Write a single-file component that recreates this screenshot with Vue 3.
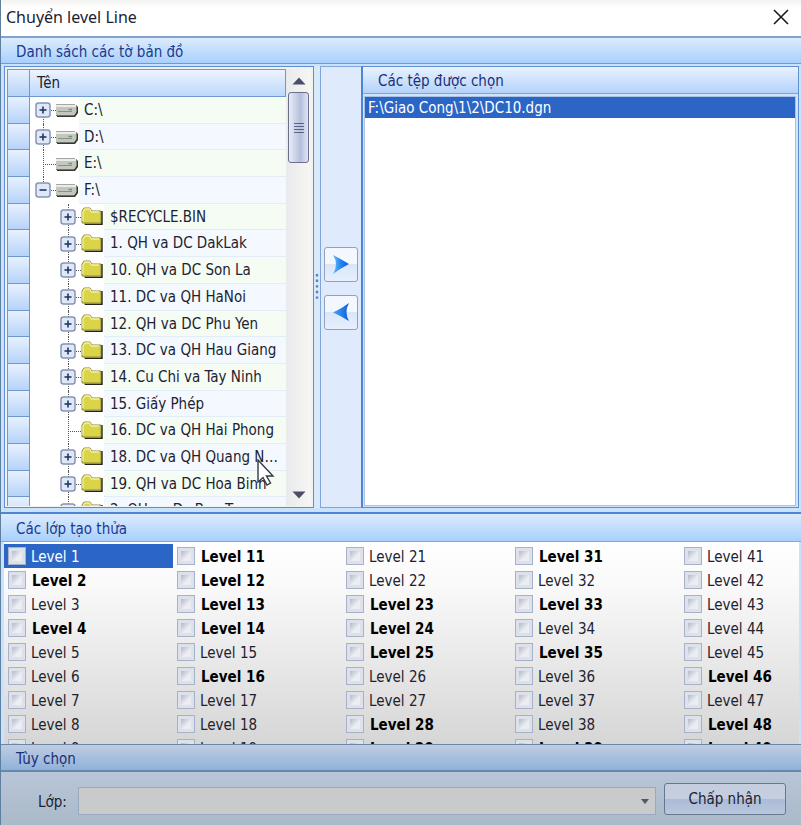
<script setup>
import { ref } from 'vue'

const drives = [
  { name: 'C:\\', expand: '+', level: 0, line: 'down' },
  { name: 'D:\\', expand: '+', level: 0, line: 'full' },
  { name: 'E:\\', expand: '', level: 0, line: 'full' },
  { name: 'F:\\', expand: '-', level: 0, line: 'up' },
]
const folders = [
  '$RECYCLE.BIN',
  '1. QH va DC DakLak',
  '10. QH va DC Son La',
  '11. DC va QH HaNoi',
  '12. QH va DC Phu Yen',
  '13. DC va QH Hau Giang',
  '14. Cu Chi va Tay Ninh',
  '15. Giấy Phép',
  '16. DC va QH Hai Phong',
  '18. DC va QH Quang Ngai',
  '19. QH va DC Hoa Binh',
  '2. QH va Dc Bao Tam',
].map((name) => ({ name, expand: name.startsWith('16') ? '' : '+', level: 1, line: 'full' }))
const rows = [...drives, ...folders]

const used = [2, 4, 11, 12, 13, 14, 16, 23, 24, 25, 28, 29, 31, 33, 35, 39, 46, 48, 49]
const levels = []
for (let column = 0; column < 5; column++) {
  for (let n = 1; n <= 9; n++) {
    const id = column * 10 + n
    levels.push({ id, bold: used.includes(id) })
  }
}
const checked = ref([])
const layer = ref('')
</script>

<template>
  <main class="window">
    <header class="titlebar">
      <h1>Chuyển level Line</h1>
      <button class="close" type="button" aria-label="Đóng">
        <svg width="16" height="16" viewBox="0 0 16 16"><path d="M1 1L15 15M15 1L1 15" stroke="#1c1c1c" stroke-width="1.6" fill="none" /></svg>
      </button>
    </header>

    <h2 class="caption">Danh sách các tờ bản đồ</h2>
    <section class="panes">
      <div class="tree">
        <div class="grid">
          <div class="head"><span class="indicator"></span><span class="column">Tên</span></div>
          <div class="viewport">
            <div class="rows" role="tree">
              <div v-for="row in rows" :key="row.name" class="row" role="treeitem">
                <span class="indicator"></span>
                <span class="node" :class="[row.line, { child: row.level }]">
                  <button v-if="row.expand" class="expander" type="button" :aria-label="row.name">
                    <svg width="16" height="16" viewBox="0 0 16 16">
                      <rect x="1" y="1" width="14" height="14" rx="2.5" fill="#dfe8f8" stroke="#8795b5" stroke-width="1.5" />
                      <path d="M4.500 8H11.500" stroke="#25355f" stroke-width="1.6" />
                      <path v-if="row.expand === '+'" d="M8 4.500V11.500" stroke="#25355f" stroke-width="1.6" />
                    </svg>
                  </button>
                </span>
                <svg v-if="row.level" class="icon" width="23" height="20" viewBox="0 0 23 20">
                  <path d="M3 16.500H20V4H21.700V18H4Z" fill="#262419" />
                  <path d="M1 15.500V4L3 1H9L11 4H20V16H1Z" fill="#d9d448" stroke="#8f8a3c" />
                  <path d="M2 14V5L4 2H8.500L10.500 5H18" fill="none" stroke="#f5f0a2" stroke-width="1.3" />
                </svg>
                <svg v-else class="icon" width="23" height="20" viewBox="0 0 23 20">
                  <path d="M1 15H18L20 12V5L22 7V13L19 17H1Z" fill="#35382f" />
                  <path d="M0 5H19L20.500 7V12L18 15.500H0Z" fill="#c3c7c0" />
                  <path d="M0 4.500H19L20.500 7H0Z" fill="#e9ece7" />
                  <path d="M0 4.500H19" stroke="#a4a8a1" />
                  <path d="M0 15.500H18" stroke="#6f746c" />
                  <path d="M2 11.500H16" stroke="#8b9188" />
                  <path d="M12.500 9.500H16" stroke="#5f9d63" stroke-width="1.5" />
                </svg>
                <span class="name">{{ row.name }}</span>
              </div>
            </div>
          </div>
          <svg class="pointer" width="20" height="28" viewBox="0 0 20 28"><path d="M2 1V23L7 18.500L11 26L14.500 24L10.500 17H17Z" fill="#fff" stroke="#333a42" stroke-width="1.4" /></svg>
        </div>
        <div class="scrollbar">
          <button type="button" aria-label="Cuộn lên"><svg width="14" height="8" viewBox="0 0 14 8"><path d="M0.500 7.500L7 0.500L13.500 7.500Z" fill="#4c4c68" /></svg></button>
          <div class="thumb"><svg width="10" height="12" viewBox="0 0 10 12"><path d="M0 1.500H10M0 4.500H10M0 7.500H10M0 10.500H10" stroke="#59618a" /></svg></div>
          <button class="down" type="button" aria-label="Cuộn xuống"><svg width="14" height="8" viewBox="0 0 14 8"><path d="M0.500 0.500H13.500L7 7.500Z" fill="#4c4c68" /></svg></button>
        </div>
      </div>
      <div class="splitter"><svg width="4" height="26" viewBox="0 0 4 26"><path d="M2 0V26" stroke="#4f83cf" stroke-width="2.4" stroke-dasharray="2.400 3.200" /></svg></div>
      <div class="transfer">
        <button type="button" aria-label="Thêm">
          <svg width="18" height="22" viewBox="0 0 18 22"><defs><linearGradient id="add"><stop offset="0" stop-color="#6fbdf5" /><stop offset="0.500" stop-color="#1f83ee" /><stop offset="1" stop-color="#0a5fd8" /></linearGradient></defs><path d="M1 2Q9 6 17 11Q9 15 1 21Q7 11 1 2Z" fill="url(#add)" /></svg>
        </button>
        <button type="button" aria-label="Bớt">
          <svg width="18" height="22" viewBox="0 0 18 22"><defs><linearGradient id="remove"><stop offset="0" stop-color="#4aa6f5" /><stop offset="1" stop-color="#0a5fd8" /></linearGradient></defs><path d="M17 2Q12 11 17 20Q9 15 1 11.500Q9 8 17 2Z" fill="url(#remove)" /></svg>
        </button>
      </div>
      <div class="chosen">
        <h3>Các tệp được chọn</h3>
        <ul><li>F:\Giao Cong\1\2\DC10.dgn</li></ul>
      </div>
    </section>

    <h2 class="caption layers">Các lớp tạo thửa</h2>
    <section class="levels">
      <label v-for="level in levels" :key="level.id" :class="{ bold: level.bold, selected: level.id === 1 }">
        <input v-model="checked" type="checkbox" :value="level.id" />
        <span>Level {{ level.id }}</span>
      </label>
    </section>

    <h2 class="caption options">Tùy chọn</h2>
    <form class="form" @submit.prevent>
      <label for="layer">Lớp:</label>
      <div class="combo">
        <select id="layer" v-model="layer"><option value=""></option></select>
        <svg width="8" height="5" viewBox="0 0 8 5"><path d="M0 0H8L4 5Z" fill="#4f5865" /></svg>
      </div>
      <button class="accept" type="submit">Chấp nhận</button>
    </form>
  </main>
</template>

<style>
body {
  margin: 0;
}
</style>

<style scoped>
* {
  box-sizing: border-box;
}
.window {
  display: flex;
  flex-direction: column;
  height: 100vh;
  overflow: hidden;
  border-left: 1px solid #5f7f9f;
  background: #c9e2fd;
  color: #1d2230;
  font: 15px/20px "DejaVu Sans Condensed", "Noto Sans", sans-serif;
}
button {
  padding: 0;
  font: inherit;
  color: inherit;
}
h1, h2, h3, ul {
  margin: 0;
  padding: 0;
  font-weight: normal;
}
svg {
  display: block;
  flex: none;
}
.titlebar {
  display: flex;
  flex: none;
  align-items: center;
  justify-content: space-between;
  height: 36px;
  padding: 0 12px 2px 5px;
  background: linear-gradient(#f3f2f0, #fff 8px);
}
h1 {
  font: 16px/24px "Noto Sans", sans-serif;
}
.close {
  border: 0;
  background: none;
}
.caption {
  flex: none;
  height: 28px;
  padding: 4px 15px 0;
  border-top: 2px solid #7fa3cd;
  border-bottom: 1px solid #6b9bd8;
  background: linear-gradient(#dcebfe, #a9d0fd);
  color: #1b3a8c;
  font-size: 15px;
  line-height: 20px;
}
.panes {
  display: flex;
  flex: 1;
  min-height: 0;
  padding: 2px 2px 4px 3px;
}
.tree {
  display: flex;
  flex: none;
  width: 310px;
  padding: 2px 2px 1px;
  border: 1px solid #5f8fd0;
  background: #f0f1f1;
}
.grid {
  position: relative;
  display: flex;
  flex: 1;
  flex-direction: column;
  min-width: 0;
  background: #fff;
}
.head {
  display: flex;
  flex: none;
  height: 28px;
  border: 1px solid #6f98d0;
  background: linear-gradient(#edf4fe, #bdd8fa);
}
.head .indicator {
  border-bottom: 0;
}
.column {
  padding: 3px 7px;
}
.indicator {
  flex: none;
  width: 22px;
  border-right: 1px solid #6f98d0;
  border-bottom: 1px solid #6f98d0;
  background: linear-gradient(#e8f1fe, #b6d3f9);
}
.viewport {
  flex: 1;
  min-height: 0;
  overflow: hidden;
  border-left: 1px solid #6f98d0;
}
.rows {
  display: grid;
  grid-template-rows: repeat(16, minmax(0, 1fr));
  grid-template-columns: minmax(0, 1fr);
  height: 427px;
}
.row {
  display: flex;
}
.node {
  position: relative;
  display: flex;
  flex: none;
  align-items: center;
  width: 21px;
  margin-left: 5px;
}
.node.child {
  margin-left: 30px;
}
.node::before {
  content: "";
  position: absolute;
  top: 0;
  bottom: 0;
  left: 8px;
  border-left: 1px dotted #555;
}
.node.down::before {
  top: 50%;
}
.node.up::before {
  bottom: 50%;
}
.node::after {
  content: "";
  position: absolute;
  top: 50%;
  left: 8px;
  right: 0;
  border-top: 1px dotted #555;
}
.expander {
  z-index: 1;
  border: 0;
  background: none;
}
.icon {
  align-self: center;
}
.name {
  flex: 1;
  min-width: 0;
  padding: 3px 4px 0 5px;
  overflow: hidden;
  border-bottom: 1px solid #e3edf8;
  background: #f5fcf4;
  text-overflow: ellipsis;
  white-space: nowrap;
}
.child ~ .name {
  padding-left: 6px;
}
.row:nth-child(even) .name {
  background: #f4f9ff;
}
.pointer {
  position: absolute;
  right: 10px;
  bottom: 19px;
}
.scrollbar {
  display: flex;
  flex: none;
  flex-direction: column;
  align-items: center;
  width: 25px;
  background: linear-gradient(90deg, #e9eaec, #f7f6f3);
}
.scrollbar button {
  display: grid;
  flex: none;
  place-items: center;
  width: 21px;
  height: 23px;
  border: 0;
  background: none;
}
.scrollbar .down {
  margin-top: auto;
}
.thumb {
  display: grid;
  place-items: center;
  width: 21px;
  height: 71px;
  border: 1px solid #6c6f8c;
  border-radius: 3px;
  background: linear-gradient(90deg, #e9edf7, #b5bfdb 60%, #dfe5f2);
}
.splitter {
  display: grid;
  flex: none;
  place-items: center;
  width: 6px;
  background: #d9e9fc;
}
.transfer {
  display: flex;
  flex: none;
  flex-direction: column;
  gap: 13px;
  align-items: center;
  justify-content: center;
  width: 41px;
  padding-top: 2px;
  border: 1px solid #7fa5dc;
  border-right: 0;
  background: #dfebfc;
}
.transfer button {
  display: grid;
  place-items: center;
  width: 34px;
  height: 35px;
  border: 1px solid #93a1bf;
  border-radius: 3px;
  background: linear-gradient(#f3f7fe 50%, #dae6f8 50%, #e6effc);
}
.chosen {
  display: flex;
  flex: 1;
  flex-direction: column;
  min-width: 0;
  border: 1px solid #5f8fd0;
  border-left: 2px solid #4f86d2;
  background: #d0e4fd;
}
h3 {
  height: 27px;
  padding: 4px 15px 0;
  border-bottom: 1px solid #7aa4dc;
  background: linear-gradient(#eaf2fe, #b3d2fb);
  color: #1b2f78;
  font-size: 15px;
  line-height: 20px;
}
ul {
  flex: 1;
  margin: 2px 2px 1px 1px;
  border: 1px solid #a9c2e4;
  background: #fff;
  list-style: none;
}
li {
  height: 21px;
  padding: 1px 3px 0;
  background: #2b66c6;
  color: #fff;
}
.layers {
  height: 30px;
  padding-top: 5px;
  border-color: #4f86d2;
  border-bottom-color: #7fa9df;
}
.levels {
  display: grid;
  flex: none;
  grid-template-rows: repeat(9, 24px);
  grid-auto-flow: column;
  grid-auto-columns: 169px;
  height: 202px;
  margin: 0 2px 0 3px;
  padding-top: 2px;
  overflow: hidden;
  background: linear-gradient(#fff, #fafafa 20%, #d6d6d6);
}
.levels label {
  display: flex;
  gap: 5px;
  align-items: center;
  padding-left: 4px;
}
.levels span {
  padding-top: 2px;
}
.levels .bold {
  gap: 6px;
  color: #000;
  font-weight: bold;
}
.levels .selected {
  background: #2b66c6;
  color: #fff;
}
.levels input {
  flex: none;
  width: 18px;
  height: 18px;
  margin: 0;
  appearance: none;
  border: 1px solid #a7b1c9;
  background: linear-gradient(135deg, #b0b8ca, #eceef2 60%) center / 10px 10px no-repeat #dde1ea;
}
.options {
  border-top: 1px solid #6c86a8;
  border-bottom: 2px solid #6787ae;
  background: linear-gradient(#bfcce2, #8fb2da);
  color: #1d2f72;
}
.form {
  display: flex;
  flex: none;
  align-items: center;
  height: 53px;
  padding: 4px 15px 0 37px;
  background: linear-gradient(#b9c5d8, #a9bac8);
}
.form label {
  width: 40px;
  padding-top: 2px;
}
.combo {
  position: relative;
  flex: 1;
}
.combo select {
  display: block;
  width: 100%;
  height: 28px;
  appearance: none;
  border: 1px solid #9ba8c2;
  border-radius: 0;
  background: #c9cacb;
}
.combo svg {
  position: absolute;
  top: 12px;
  right: 7px;
  pointer-events: none;
}
.accept {
  width: 122px;
  height: 32px;
  margin: 0 0 4px 8px;
  border: 1px solid #66788f;
  border-radius: 3px;
  background: linear-gradient(#c4cede 50%, #acbbd6 50%, #b9c7dc);
}
</style>
